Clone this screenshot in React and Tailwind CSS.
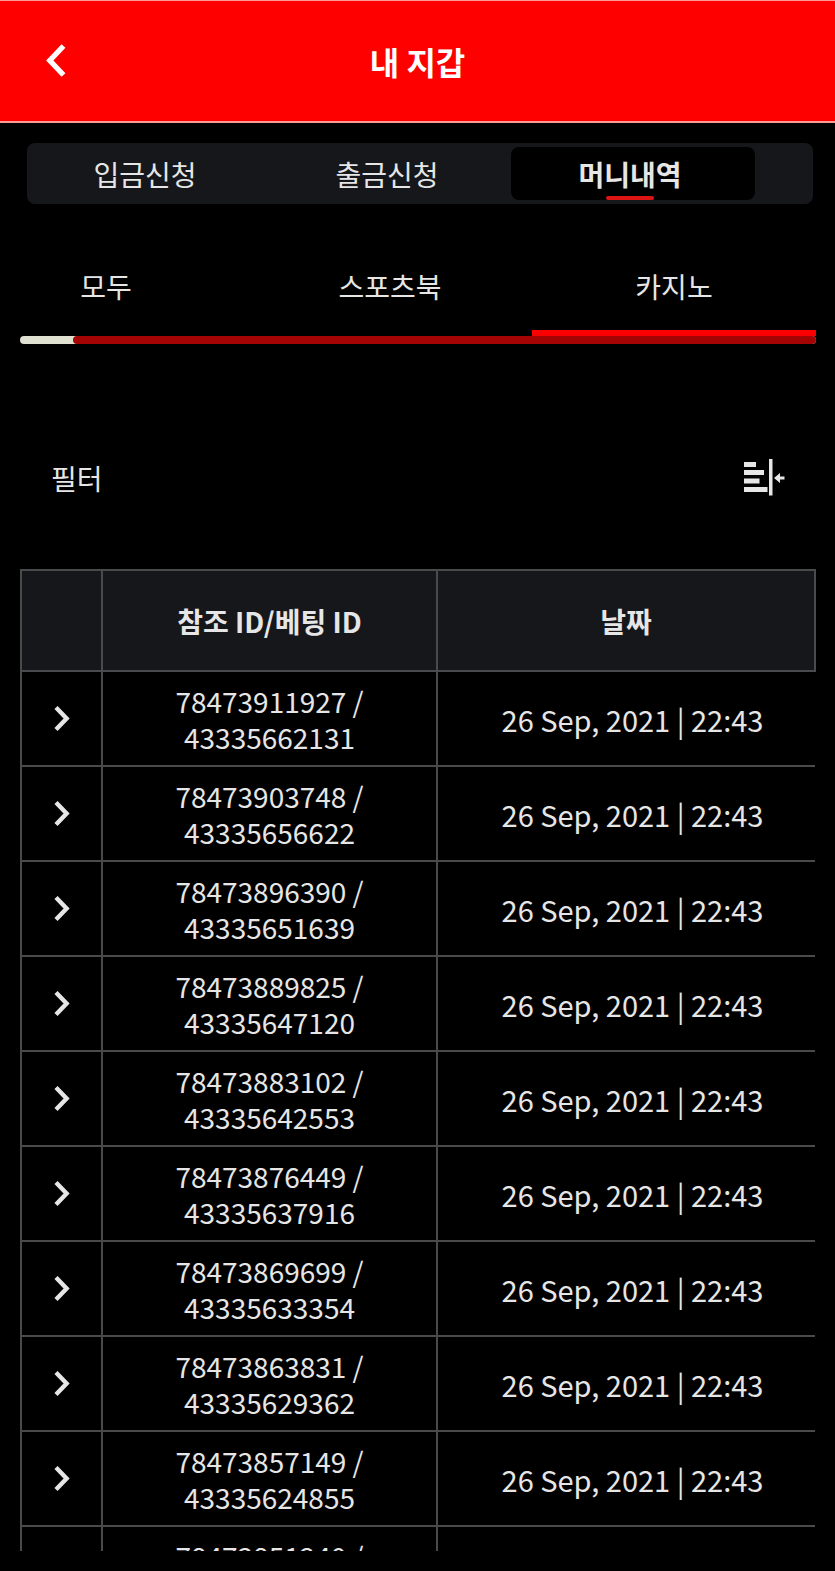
import { useState } from 'react';
import clsx from 'clsx';

const walletTabs = ['입금신청', '출금신청', '머니내역'];
const categories = ['모두', '스포츠북', '카지노'];

const bets = [
  { refId: '78473911927', betId: '43335662131', date: '26 Sep, 2021 | 22:43' },
  { refId: '78473903748', betId: '43335656622', date: '26 Sep, 2021 | 22:43' },
  { refId: '78473896390', betId: '43335651639', date: '26 Sep, 2021 | 22:43' },
  { refId: '78473889825', betId: '43335647120', date: '26 Sep, 2021 | 22:43' },
  { refId: '78473883102', betId: '43335642553', date: '26 Sep, 2021 | 22:43' },
  { refId: '78473876449', betId: '43335637916', date: '26 Sep, 2021 | 22:43' },
  { refId: '78473869699', betId: '43335633354', date: '26 Sep, 2021 | 22:43' },
  { refId: '78473863831', betId: '43335629362', date: '26 Sep, 2021 | 22:43' },
  { refId: '78473857149', betId: '43335624855', date: '26 Sep, 2021 | 22:43' },
  { refId: '78473851240', betId: '43335620318', date: '26 Sep, 2021 | 22:43' },
];

function BackIcon() {
  return (
    <svg width="20" height="34" viewBox="0 0 20 34" fill="none" aria-hidden="true">
      <path d="M17.5 2 3.8 16.5l13.7 14.5" stroke="#fff" strokeWidth="5.4" />
    </svg>
  );
}

function ExpandIcon() {
  return (
    <svg width="16" height="26" viewBox="0 0 16 26" fill="none" aria-hidden="true">
      <path d="M2 1.5 12.6 12.5 2 23.5" stroke="currentColor" strokeWidth="4.4" />
    </svg>
  );
}

function FilterIcon() {
  return (
    <svg width="41" height="38" viewBox="0 0 41 38" fill="currentColor" aria-hidden="true">
      <path d="M0 3h12v5H0zM0 11h20v5H0zM0 19.5h15.500v5H0zM0 28h23.500v5H0zM25 0h3.500v36.500H25z" />
      <path d="M30 19l6-5v3.500h4.500v3H36V24z" />
    </svg>
  );
}

function Header() {
  return (
    <header className="grid h-[123px] shrink-0 grid-cols-[1fr_auto_1fr] items-center border-t border-b-2 border-[#ff9a94] bg-[#ff0000] px-[46px]">
      <button type="button" aria-label="뒤로" className="justify-self-start">
        <BackIcon />
      </button>
      <h1 className="text-[32px] leading-10 font-bold text-white">내 지갑</h1>
    </header>
  );
}

function WalletTabs() {
  const [active, setActive] = useState(2);

  return (
    <nav className="mt-5 mr-[22px] ml-[27px] grid h-[61px] shrink-0 grid-cols-[242fr_242fr_244fr_58fr] rounded-lg bg-[#16171b] py-1">
      {walletTabs.map((tab, idx) => (
        <button
          key={tab}
          type="button"
          onClick={() => setActive(idx)}
          className={clsx(
            'flex flex-col items-center justify-between rounded-lg pt-[7px] pr-1.5 leading-10',
            active === idx && 'bg-black font-bold'
          )}
        >
          {tab}
          <span className={clsx('h-1 w-12 shrink-0 rounded-sm', active === idx && 'bg-[#dc1414]')} />
        </button>
      ))}
    </nav>
  );
}

function CategoryTabs() {
  const [active, setActive] = useState(2);

  return (
    <div className="mt-9 shrink-0">
      {/* scrolled to the end, so the first tab is partly out of view */}
      <div className="flex justify-end overflow-hidden">
        {categories.map((category, idx) => (
          <button
            key={category}
            type="button"
            onClick={() => setActive(idx)}
            className={clsx(
              'h-24 shrink-0 grow basis-[284px] border-b-6 pt-0.5',
              active === idx ? 'border-[#fb0000]' : 'border-transparent'
            )}
          >
            {category}
          </button>
        ))}
      </div>
      <div className="h-2 rounded-full bg-[#e0e1d0]">
        <div className="ml-[53px] h-full rounded-full bg-[#a40404]" />
      </div>
    </div>
  );
}

function BetTable() {
  return (
    <div className="mt-[31px] min-h-0 flex-1 overflow-auto [scrollbar-width:none]">
      <table className="w-full table-fixed border-collapse text-center">
        <thead>
          <tr className="h-[101px] bg-[#16171b]">
            <th aria-label="상세" className="w-[81px] border-2 border-[#4a4a4d]" />
            <th className="w-[335px] border-2 border-[#4a4a4d]">참조 ID/베팅 ID</th>
            <th className="border-2 border-[#4a4a4d]">날짜</th>
          </tr>
        </thead>
        <tbody>
          {bets.map((bet) => (
            <tr key={bet.refId} className="h-[95px]">
              <td className="border-2 border-[#4a4a4d]">
                <button type="button" aria-label="펼치기" className="mx-auto block">
                  <ExpandIcon />
                </button>
              </td>
              <td className="border-2 border-[#4a4a4d] leading-9">
                {bet.refId} /<br />
                {bet.betId}
              </td>
              <td className="border-2 border-r-0 border-[#4a4a4d] pl-3 text-[29px]">{bet.date}</td>
            </tr>
          ))}
        </tbody>
      </table>
    </div>
  );
}

export default function App() {
  return (
    <div className="flex h-screen flex-col bg-black pb-5 font-['Noto_Sans_CJK_KR',sans-serif] text-[28px] leading-10 text-[#e6e6e6]">
      <Header />
      <WalletTabs />
      <main className="mr-[19px] ml-5 flex min-h-0 flex-1 flex-col">
        <CategoryTabs />
        <div className="mt-[74px] flex h-[120px] shrink-0 items-center justify-between px-[31px]">
          <span>필터</span>
          <button type="button" aria-label="필터">
            <FilterIcon />
          </button>
        </div>
        <BetTable />
      </main>
    </div>
  );
}
